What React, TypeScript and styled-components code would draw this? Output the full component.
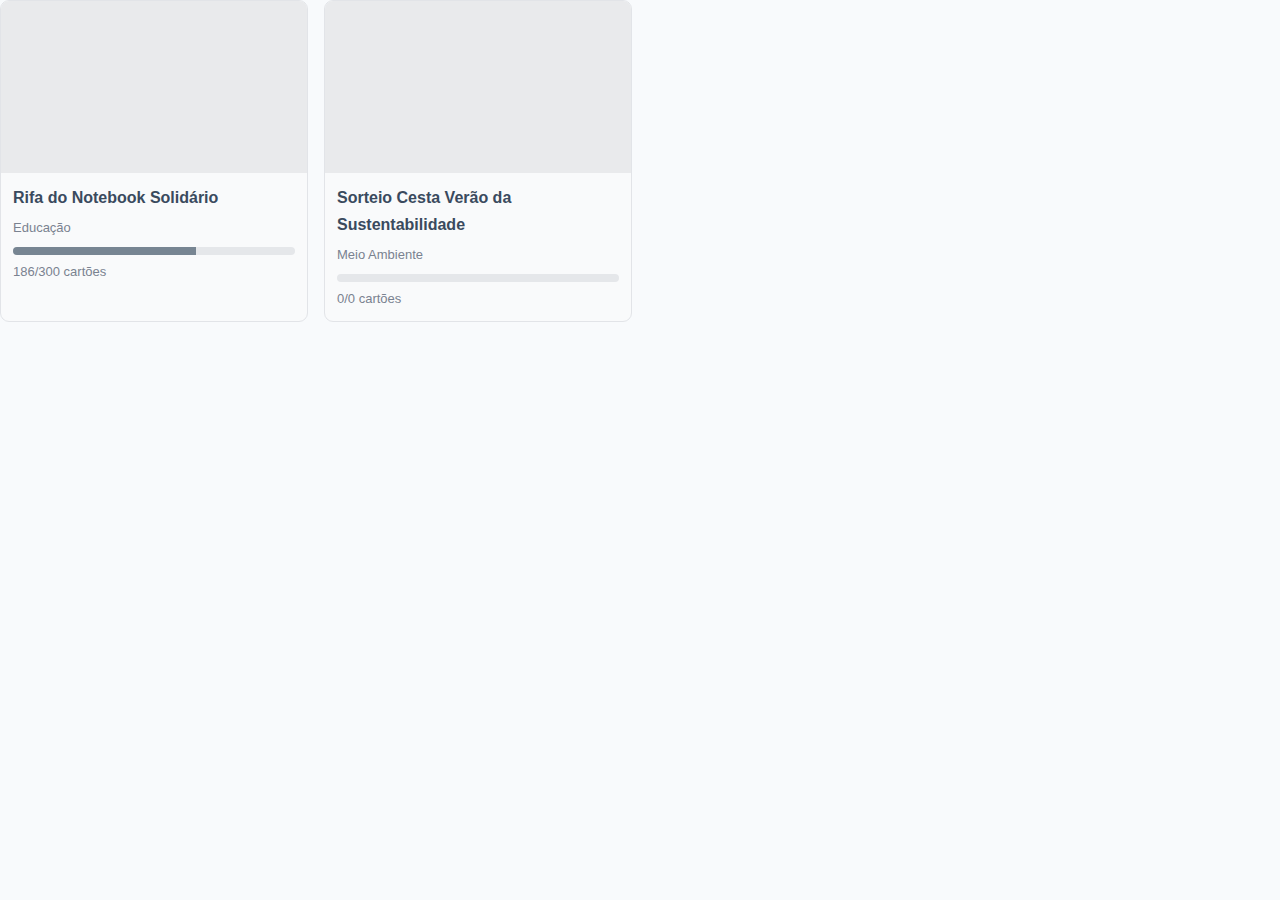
import { createGlobalStyle } from "styled-components";
import styled from "styled-components";

type Raffle = {
  id: number;
  title: string;
  category: string;
  sold: number;
  total: number;
  progress: number;
};

const raffles: Raffle[] = [
  {
    id: 1,
    title: "Rifa do Notebook Solidário",
    category: "Educação",
    sold: 186,
    total: 300,
    progress: 65,
  },
  {
    id: 2,
    title: "Sorteio Cesta Verão da Sustentabilidade",
    category: "Meio Ambiente",
    sold: 0,
    total: 0,
    progress: 0,
  },
];

const GlobalStyle = createGlobalStyle`
  html, body {
    margin: 0;
    padding: 0;
    background: #f8fafc;
    font-family: "Liberation Sans", Arial, sans-serif;
  }
  body {
    min-height: 900px;
  }
`;

const Grid = styled.div`
  display: grid;
  grid-template-columns: repeat(auto-fill, 308px);
  gap: 16px;
  align-items: stretch;
`;

const Card = styled.div`
  background: #f9fafb;
  border: 1px solid #e2e4e8;
  border-radius: 9px;
  overflow: hidden;
  display: flex;
  flex-direction: column;
`;

const Cover = styled.div`
  height: 172px;
  background: #e9eaec;
`;

const Body = styled.div`
  padding: 11px 12px 12px;
  display: flex;
  flex-direction: column;
`;

const Title = styled.h3`
  margin: 0;
  font-size: 16px;
  font-weight: 700;
  line-height: 1.7;
  color: #3a4a5e;
`;

const Category = styled.span`
  margin-top: 7px;
  font-size: 13px;
  line-height: 20px;
  color: #7a8290;
`;

const Track = styled.div`
  margin-top: 9px;
  height: 8px;
  border-radius: 4px;
  background: #e5e7ea;
  overflow: hidden;
`;

const Fill = styled.div`
  height: 100%;
  background: #778592;
`;

const Count = styled.span`
  margin-top: 7px;
  font-size: 13px;
  line-height: 20px;
  color: #7a8290;
`;

const RaffleCard: React.FC<{ raffle: Raffle }> = ({ raffle }) => (
  <Card>
    <Cover />
    <Body>
      <Title>{raffle.title}</Title>
      <Category>{raffle.category}</Category>
      <Track>
        <Fill style={{ width: `${raffle.progress}%` }} />
      </Track>
      <Count>{`${raffle.sold}/${raffle.total} cartões`}</Count>
    </Body>
  </Card>
);

const App = () => (
  <>
    <GlobalStyle />
    <Grid>
      {raffles.map((r) => (
        <RaffleCard key={r.id} raffle={r} />
      ))}
    </Grid>
  </>
);

export default App;
